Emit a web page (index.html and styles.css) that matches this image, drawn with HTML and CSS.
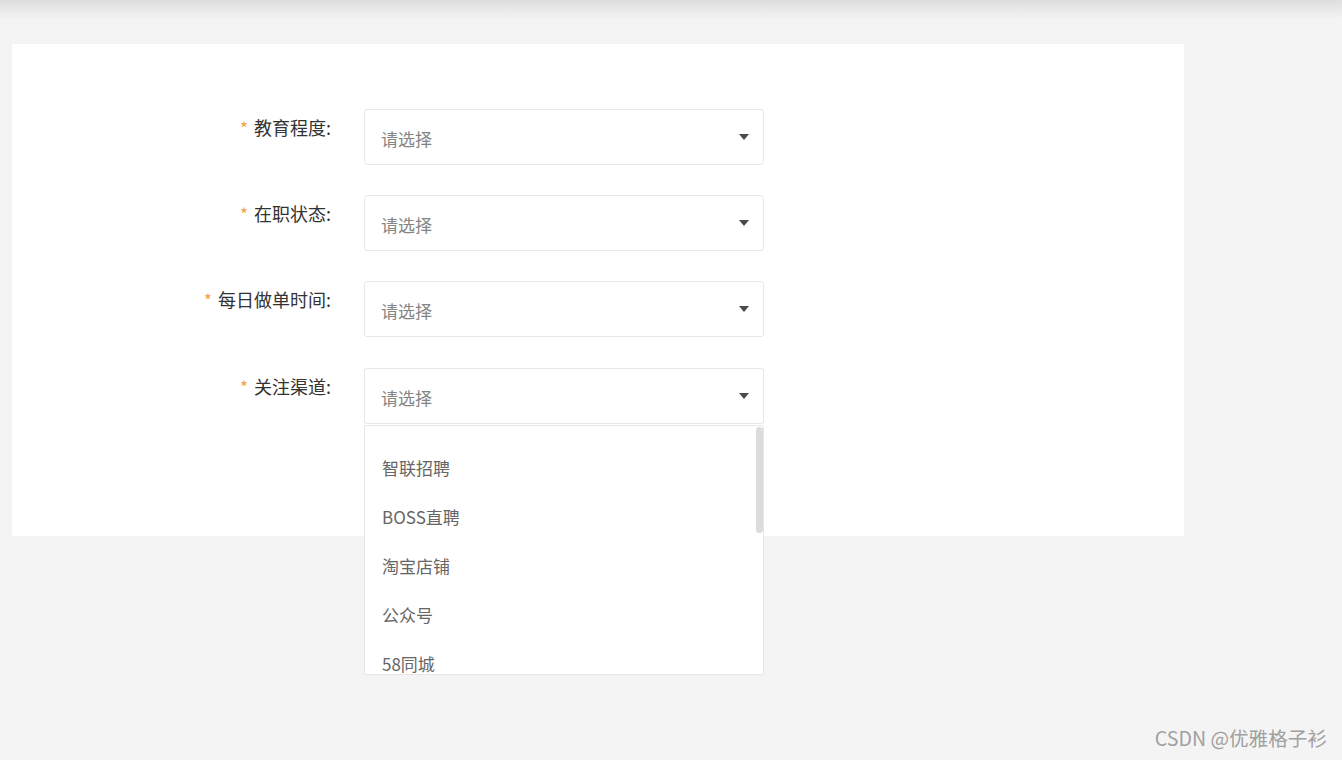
FILE: index.html
```html
<!DOCTYPE html>
<html lang="zh">
<head>
<meta charset="utf-8">
<title>表单</title>
<link rel="stylesheet" href="styles.css">
</head>
<body>
<div class="topbar"></div>
<div class="page">
  <div class="card">
    <div class="row">
      <div class="label"><span class="req">*</span>教育程度:</div>
      <div class="select"><span class="ph">请选择</span><span class="arrow"></span></div>
    </div>
    <div class="row">
      <div class="label"><span class="req">*</span>在职状态:</div>
      <div class="select"><span class="ph">请选择</span><span class="arrow"></span></div>
    </div>
    <div class="row">
      <div class="label"><span class="req">*</span>每日做单时间:</div>
      <div class="select"><span class="ph">请选择</span><span class="arrow"></span></div>
    </div>
    <div class="row row-last">
      <div class="label"><span class="req">*</span>关注渠道:</div>
      <div class="select-wrap">
        <div class="select"><span class="ph">请选择</span><span class="arrow"></span></div>
        <div class="dropdown">
          <ul class="options">
            <li>智联招聘</li>
            <li>BOSS直聘</li>
            <li>淘宝店铺</li>
            <li>公众号</li>
            <li>58同城</li>
          </ul>
          <div class="scrollbar"></div>
        </div>
      </div>
    </div>
  </div>
</div>
<div class="watermark">CSDN @优雅格子衫</div>
</body>
</html>
```
FILE: styles.css
```css
html, body {
  margin: 0;
  padding: 0;
}
body {
  background: #f4f4f4;
  font-family: "Noto Sans CJK SC", "Noto Sans", sans-serif;
  width: 1342px;
  height: 760px;
  position: relative;
  overflow: hidden;
}
.topbar {
  height: 20px;
  background: linear-gradient(#dedede, #f4f4f4);
}
.page {
  padding: 24px 0 0 12px;
}
.card {
  width: 1172px;
  height: 492px;
  box-sizing: border-box;
  background: #fff;
  padding-top: 65px;
  display: flex;
  flex-direction: column;
  gap: 30px;
}
.row {
  display: flex;
  align-items: flex-start;
}
.row-last {
  margin-top: 1px;
}
.label {
  width: 319px;
  text-align: right;
  font-size: 18px;
  color: #333;
  line-height: 24px;
  padding-top: 6px;
  margin-right: 33px;
}
.req {
  color: #f5a043;
  margin-right: 6px;
  font-size: 17px;
}
.select-wrap {
  position: relative;
}
.select {
  width: 400px;
  height: 56px;
  box-sizing: border-box;
  border: 1px solid #e8e8e8;
  border-radius: 3px;
  display: flex;
  align-items: center;
  justify-content: space-between;
  padding: 0 14px 0 16px;
}
.ph {
  font-size: 17px;
  color: #858585;
  padding-top: 2px;
}
.arrow {
  width: 0;
  height: 0;
  border-left: 5px solid transparent;
  border-right: 5px solid transparent;
  border-top: 6px solid #4a4a4a;
}
.dropdown {
  position: absolute;
  left: 0;
  top: 57px;
  width: 400px;
  height: 250px;
  box-sizing: border-box;
  border: 1px solid #e6e6e6;
  border-radius: 2px;
  background: #fff;
  overflow: hidden;
}
.options {
  list-style: none;
  margin: 0;
  padding: 17px 0 0 0;
}
.options li {
  height: 49px;
  line-height: 49px;
  padding-left: 17px;
  font-size: 17px;
  color: #666;
}
.scrollbar {
  position: absolute;
  right: 0;
  top: 1px;
  width: 7px;
  height: 106px;
  border-radius: 4px;
  background: #dcdcdc;
}
.watermark {
  position: absolute;
  right: 15px;
  bottom: 8px;
  font-family: "Noto Sans CJK SC", "Liberation Sans", sans-serif;
  font-size: 19.6px;
  color: #a0a0a0;
}
```
